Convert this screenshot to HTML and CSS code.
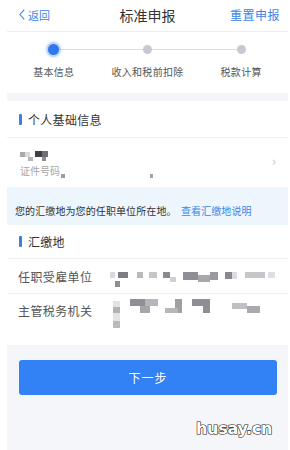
FILE: index.html
```html
<!DOCTYPE html>
<html lang="zh">
<head>
<meta charset="utf-8">
<link rel="stylesheet" href="styles.css">
</head>
<body>
<div class="page">
  <header class="nav">
    <div class="back"><svg class="back-ico" width="6" height="11" viewBox="0 0 6 11"><path d="M5.3 0.6 L0.9 5.5 L5.3 10.4" fill="none" stroke="#3a86e8" stroke-width="1.1"/></svg><span>返回</span></div>
    <div class="title">标准申报</div>
    <div class="reset">重置申报</div>
  </header>

  <section class="steps">
    <div class="track"></div>
    <div class="step active"><span class="dot"></span><span class="label">基本信息</span></div>
    <div class="step"><span class="dot"></span><span class="label">收入和税前扣除</span></div>
    <div class="step"><span class="dot"></span><span class="label">税款计算</span></div>
  </section>

  <div class="gap"></div>

  <div class="sec-title"><span class="bar"></span>个人基础信息</div>

  <div class="person">
    <div class="person-main">
      <div class="name-blur"></div>
      <div class="id-line"><span class="id-label">证件号码</span><i class="b id1"></i><i class="b id2"></i></div>
    </div>
    <span class="chev">›</span>
  </div>

  <div class="notice">您的汇缴地为您的任职单位所在地。 <span class="link">查看汇缴地说明</span></div>

  <div class="sec-title sec2"><span class="bar"></span>汇缴地</div>

  <div class="row r1">
    <span class="row-label">任职受雇单位</span>
    <div class="blur blur-unit"></div>
  </div>

  <div class="row r2">
    <span class="row-label">主管税务机关</span>
    <div class="blur blur-office"></div>
  </div>

  <footer class="bottom">
    <button class="next">下一步</button>
  </footer>
</div>
<div class="wm">husay.cn</div>
</body>
</html>
```

FILE: styles.css
```css
* { box-sizing: border-box; margin: 0; padding: 0; }
html, body { width: 290px; height: 450px; background: #fff; overflow: hidden; }
body {
  font-family: "Noto Sans CJK SC", "Noto Sans", sans-serif;
  color: #333;
  position: relative;
}
.page {
  margin-left: 7px;
  width: 281px;
  height: 450px;
  display: flex;
  flex-direction: column;
}
.nav {
  height: 32px;
  border-bottom: 1px solid #eceef1;
  display: flex;
  align-items: center;
  justify-content: space-between;
  padding: 0 8px 2px 12px;
  position: relative;
}
.back { display: flex; align-items: center; gap: 3px; color: #3a86e8; font-size: 11px; }
.back-ico { display: block; }
.title {
  position: absolute;
  left: 0; right: 0;
  text-align: center;
  font-size: 14px;
  color: #333;
  pointer-events: none;
}
.reset { color: #3a86e8; font-size: 12px; letter-spacing: 0.5px; }

.steps {
  height: 61px;
  display: grid;
  grid-template-columns: 1fr 1fr 1fr;
  position: relative;
}
.track {
  position: absolute;
  left: 47px; right: 47px;
  top: 17px;
  height: 1px;
  background: #dcdee2;
}
.step {
  display: flex;
  flex-direction: column;
  align-items: center;
  position: relative;
}
.dot {
  margin-top: 13px;
  width: 9px; height: 9px;
  border-radius: 50%;
  background: #c6c9cf;
}
.step.active .dot {
  width: 11px; height: 11px;
  margin-top: 12px;
  background: #2f76f0;
  box-shadow: 0 0 0 2px rgba(47,118,240,0.22), 0 0 3px 3px rgba(47,118,240,0.12);
}
.label { margin-top: 10px; font-size: 10px; color: #555; letter-spacing: 0.3px; }
.step.active .label { margin-top: 9px; }

.gap { height: 8px; background: #f5f6f9; }

.sec-title {
  height: 37px;
  display: flex;
  align-items: center;
  padding-left: 12px;
  font-size: 12px;
  color: #333;
  border-bottom: 1px solid #eef0f2;
  letter-spacing: 0.3px;
}
.bar { width: 3px; height: 11px; background: #3b7ee6; border-radius: 1px; margin-right: 6px; }

.person {
  height: 49px;
  display: flex;
  align-items: center;
  justify-content: space-between;
  padding: 0 12px 0 13px;
}
.person-main { display: flex; flex-direction: column; padding-top: 2px; }
.name-blur {
  width: 28px;
  height: 10px;
  background:
    linear-gradient(#a9aaae, #a9aaae) 0 1px / 5px 5px,
    linear-gradient(#d9dadc, #d9dadc) 5px 1px / 5px 5px,
    linear-gradient(#3f4044, #3f4044) 15px 0 / 7px 6px,
    linear-gradient(#6f7075, #6f7075) 22px 0 / 6px 6px,
    linear-gradient(#b5b6b9, #b5b6b9) 8px 6px / 5px 4px,
    linear-gradient(#8c8d91, #8c8d91) 22px 6px / 4px 4px;
  background-repeat: no-repeat;
}
.b { display: block; font-style: normal; }
.id-line { display: flex; align-items: flex-end; margin-top: 3px; }
.id-label { font-size: 10px; color: #a4a6aa; line-height: 13px; }
.id1 { width: 4px; height: 4px; background: #9c9da1; margin-left: 1px; margin-bottom: -1px; }
.id2 { width: 3px; height: 4px; background: #a5a6a9; margin-left: 85px; margin-bottom: -1px; }
.chev { color: #c0c2c6; font-size: 13px; margin-top: -4px; }

.notice {
  height: 38px;
  background: #edf5fd;
  font-size: 10px;
  color: #333;
  padding: 17px 0 0 8px;
  line-height: 14px;
  letter-spacing: 0.1px;
}
.link { color: #3a86e8; margin-left: 2px; }

.sec2 { height: 34px; padding-bottom: 1px; }

.row {
  display: flex;
  padding-left: 11px;
  font-size: 12px;
  color: #555;
}
.r1 { height: 35px; align-items: center; border-bottom: 1px solid #eef0f2; }
.r2 { height: 51px; align-items: flex-start; padding-top: 8px; }
.row-label { width: 92px; flex: none; letter-spacing: 0.4px; }
.r2 .row-label { margin-top: 0; }

.blur { background-repeat: no-repeat; }
.blur-unit {
  width: 166px;
  height: 16px;
  margin-top: 5px;
  background:
    linear-gradient(#d8d9dc, #d8d9dc) 0 1px / 5px 6px,
    linear-gradient(#8d8e93, #8d8e93) 5px 10px / 5px 6px,
    linear-gradient(#7c7d82, #7c7d82) 8px 1px / 10px 6px,
    linear-gradient(#b9babe, #b9babe) 27px 1px / 6px 6px,
    linear-gradient(#c4c5c8, #c4c5c8) 39px 1px / 8px 6px,
    linear-gradient(#8a8b90, #8a8b90) 53px 1px / 7px 6px,
    linear-gradient(#cfd0d3, #cfd0d3) 60px 6px / 6px 5px,
    linear-gradient(#8e8f94, #8e8f94) 73px 1px / 15px 8px,
    linear-gradient(#a7a8ac, #a7a8ac) 88px 4px / 12px 7px,
    linear-gradient(#9a9ba0, #9a9ba0) 100px 1px / 8px 8px,
    linear-gradient(#898a8f, #898a8f) 115px 1px / 7px 7px,
    linear-gradient(#dcdde0, #dcdde0) 122px 1px / 5px 7px,
    linear-gradient(#c5c6c9, #c5c6c9) 135px 1px / 20px 6px,
    linear-gradient(#dedfe1, #dedfe1) 158px 1px / 7px 6px;
  background-repeat: no-repeat;
}
.blur-office {
  width: 150px;
  height: 29px;
  margin-left: 3px;
  margin-top: -3px;
  background:
    linear-gradient(#e2e3e5, #e2e3e5) 0 2px / 7px 6px,
    linear-gradient(#b1b2b6, #b1b2b6) 0 8px / 7px 6px,
    linear-gradient(#e2e3e5, #e2e3e5) 0 14px / 7px 8px,
    linear-gradient(#b9babd, #b9babd) 0 22px / 7px 7px,
    linear-gradient(#8f9095, #8f9095) 17px 0 / 15px 7px,
    linear-gradient(#b5b6ba, #b5b6ba) 32px 0 / 13px 7px,
    linear-gradient(#a5a6aa, #a5a6aa) 27px 7px / 10px 7px,
    linear-gradient(#b6b7bb, #b6b7bb) 52px 9px / 13px 5px,
    linear-gradient(#9fa0a4, #9fa0a4) 62px 0 / 7px 14px,
    linear-gradient(#8e8f94, #8e8f94) 79px 0 / 18px 7px,
    linear-gradient(#8e8f94, #8e8f94) 90px 7px / 7px 7px,
    linear-gradient(#bfc0c4, #bfc0c4) 119px 4px / 15px 6px,
    linear-gradient(#a9aaae, #a9aaae) 134px 7px / 13px 7px;
  background-repeat: no-repeat;
}

.bottom {
  flex: 1;
  background: #f5f6f9;
  padding: 15px 11px 0 12px;
}
.next {
  display: block;
  width: 100%;
  height: 35px;
  border: 0;
  border-radius: 3px;
  background: #3281f5;
  color: #fff;
  font-family: "Noto Sans CJK SC", sans-serif;
  font-size: 12px;
  letter-spacing: 1px;
}

.wm {
  position: absolute;
  left: 196px;
  top: 419px;
  font-family: "DejaVu Sans", sans-serif;
  font-weight: bold;
  font-size: 16px;
  letter-spacing: -0.3px;
  color: #fff;
  -webkit-text-stroke: 1.2px #222;
  paint-order: stroke fill;
}
```
